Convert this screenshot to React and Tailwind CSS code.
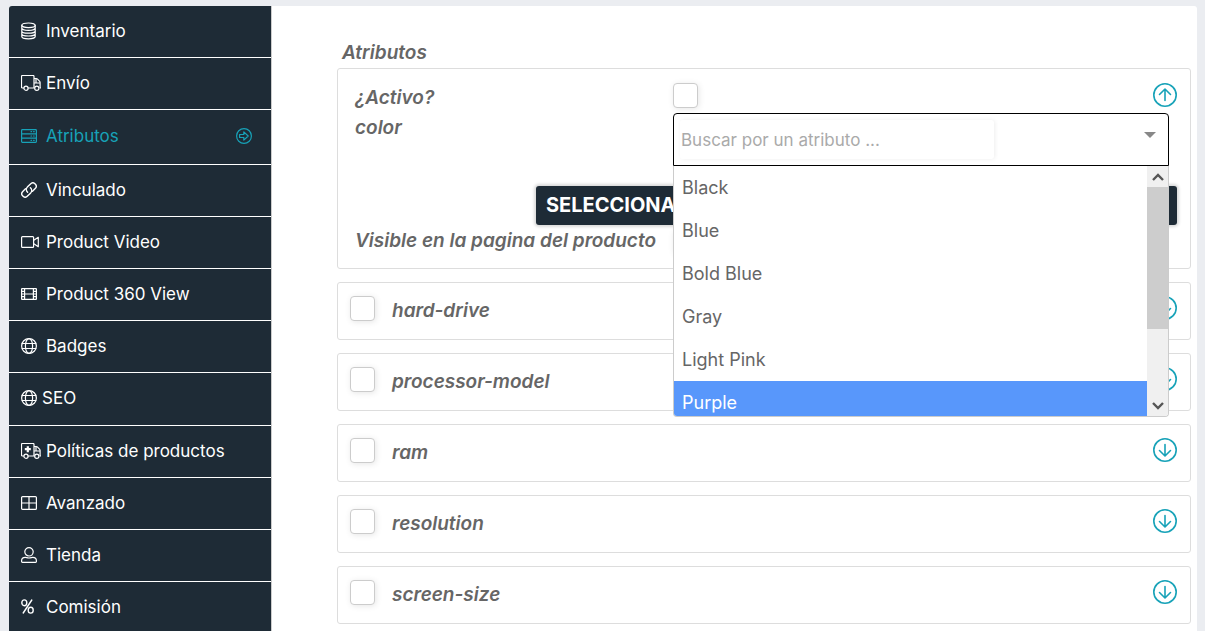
import { useState } from "react";

const strokeProps = {
  fill: "none",
  stroke: "currentColor",
  strokeWidth: 1.2,
  strokeLinecap: "round",
  strokeLinejoin: "round",
  "aria-hidden": true,
};

function DatabaseIcon() {
  return (
    <svg width="16" height="18" viewBox="0 0 16 18" {...strokeProps}>
      <ellipse cx="7.5" cy="3.3" rx="6.7" ry="2.3" />
      <path d="M.8 3.3v11.2c0 1.300 3 2.300 6.700 2.300s6.700-1 6.700-2.300V3.300M.8 6.100c0 1.300 3 2.300 6.700 2.300s6.700-1 6.700-2.300M.8 8.900c0 1.300 3 2.300 6.700 2.300s6.700-1 6.700-2.300M.8 11.700c0 1.300 3 2.300 6.700 2.300s6.700-1 6.700-2.300" />
    </svg>
  );
}

function TruckIcon({ medical = false }) {
  return (
    <svg width="20" height="16" viewBox="0 0 20 16" {...strokeProps}>
      <path d="M2.7 13H1.4a.9.9 0 0 1-.9-.9V1.4c0-.5.4-.9.9-.9h10.700c.5 0 .9.4.9.9V13M7.200 13h6M13 3.500h2.300c.4 0 .7.1 1 .4l2.400 2.500c.3.3.4.6.4 1V13h.4M13 8h6M15 4v4" />
      <circle cx="5" cy="13.200" r="2.100" />
      <circle cx="15.800" cy="13.200" r="2.100" />
      {medical && <path d="M6.800 3.200v6M3.800 6.200h6" strokeWidth="2.200" strokeLinecap="butt" />}
    </svg>
  );
}

function ServerIcon() {
  return (
    <svg width="16" height="14" viewBox="0 0 16 14" {...strokeProps}>
      <rect x=".6" y=".6" width="14.8" height="12.8" rx=".8" />
      <path d="M.6 4.8h14.8M.6 9.2h14.8" />
      <path d="M10 2.7h.6M12.6 2.7h.6M10 7h.6M12.6 7h.6M10 11.3h.6M12.6 11.3h.6" />
    </svg>
  );
}

function LinkIcon() {
  return (
    <svg width="16" height="16" viewBox="0 0 16 16" {...strokeProps} strokeWidth="1.4">
      <path d="M6.600 10.300a3.700 3.700 0 0 1-.3-5.200l3.200-3.200a3.300 3.300 0 0 1 4.700 4.700l-2.700 2.700" />
      <path d="M9.400 5.700a3.700 3.700 0 0 1 .3 5.200l-3.200 3.200a3.300 3.300 0 0 1-4.700-4.700l2.700-2.700" />
    </svg>
  );
}

function VideoIcon() {
  return (
    <svg width="18" height="12" viewBox="0 0 18 12" {...strokeProps}>
      <rect x=".6" y=".6" width="12" height="10.8" rx=".9" />
      <path d="m12.8 4.3 4.5-3v9.4l-4.5-3" />
    </svg>
  );
}

function FilmIcon() {
  return (
    <svg width="16" height="12" viewBox="0 0 16 12" {...strokeProps}>
      <rect x=".6" y=".6" width="14.8" height="10.8" rx=".5" />
      <path d="M3.6.6v10.8M12.4.6v10.8M3.6 6h8.8M.6 3.3h3M.6 6h3M.6 8.7h3M12.4 3.3h3M12.4 6h3M12.4 8.7h3" />
    </svg>
  );
}

function GlobeIcon() {
  return (
    <svg width="16" height="16" viewBox="0 0 16 16" {...strokeProps}>
      <circle cx="8" cy="8" r="7.4" />
      <ellipse cx="8" cy="8" rx="3.6" ry="7.4" />
      <path d="M1.2 5.5h13.6M1.2 10.5h13.6" />
    </svg>
  );
}

function WindowIcon() {
  return (
    <svg width="16" height="14" viewBox="0 0 16 14" {...strokeProps}>
      <rect x=".6" y=".6" width="14.8" height="12.8" rx="1" />
      <path d="M8 .6v12.8M.6 7h14.8" />
    </svg>
  );
}

function UserIcon() {
  return (
    <svg width="16" height="16" viewBox="0 0 16 16" {...strokeProps}>
      <circle cx="8" cy="4.8" r="4.2" />
      <path d="M1.4 15.4a.8.8 0 0 1-.8-.8v-.8c0-2 1.6-3.4 3.6-3.4 1.2 0 2 .6 3.8.6s2.6-.6 3.8-.6c2 0 3.6 1.4 3.6 3.4v.8c0 .5-.3.8-.8.8z" />
    </svg>
  );
}

function PercentIcon() {
  return (
    <svg width="13" height="15" viewBox="0 0 13 15" {...strokeProps} strokeWidth="1.4">
      <ellipse cx="3.3" cy="3.8" rx="2.5" ry="2.9" />
      <ellipse cx="9.7" cy="11.2" rx="2.5" ry="2.9" />
      <path d="M10.8 1 2.2 14" />
    </svg>
  );
}

function ActiveArrowIcon() {
  return (
    <svg width="16" height="16" viewBox="0 0 16 16" {...strokeProps}>
      <circle cx="8" cy="8" r="7.4" />
      <path d="M3.6 6.5h4.2V3.9L12.2 8l-4.4 4.1V9.5H3.6z" />
    </svg>
  );
}

function ToggleIcon({ up = false }) {
  return (
    <svg width="24" height="24" viewBox="0 0 24 24" {...strokeProps} strokeWidth="1.6">
      <circle cx="12" cy="12" r="11.2" />
      {up ? <path d="M12 17.5V6.500M6.500 11.500 12 6l5.500 5.500" /> : <path d="M12 6.500v11M6.500 12.500 12 18l5.500-5.500" />}
    </svg>
  );
}

const menu = [
  { label: "Inventario", icon: <DatabaseIcon /> },
  { label: "Envío", icon: <TruckIcon /> },
  { label: "Atributos", icon: <ServerIcon />, active: true },
  { label: "Vinculado", icon: <LinkIcon /> },
  { label: "Product Video", icon: <VideoIcon /> },
  { label: "Product 360 View", icon: <FilmIcon /> },
  { label: "Badges", icon: <GlobeIcon /> },
  { label: "SEO", icon: <GlobeIcon />, compact: true },
  { label: "Políticas de productos", icon: <TruckIcon medical /> },
  { label: "Avanzado", icon: <WindowIcon /> },
  { label: "Tienda", icon: <UserIcon /> },
  { label: "Comisión", icon: <PercentIcon /> },
];

const attributes = ["hard-drive", "processor-model", "ram", "resolution", "screen-size"];
const colors = ["Black", "Blue", "Bold Blue", "Gray", "Light Pink", "Purple"];

function rowHeight(item) {
  if (item.active) return "min-h-[55px] text-[#17a2b8]";
  return item.compact ? "min-h-[53px]" : "min-h-13";
}

function Sidebar() {
  return (
    <nav className="w-[262px] shrink-0 overflow-hidden rounded-tl-[3px] bg-[#1e2b36] text-[17px] leading-6 text-white">
      {menu.map((item) => (
        <a key={item.label} href="#" className={"flex items-center border-b border-white px-3 pb-0.5 " + rowHeight(item)}>
          <span className={"mr-[5px] flex shrink-0 " + (item.compact ? "w-4" : "w-5")}>{item.icon}</span>
          <span>{item.label}</span>
          {item.active && (
            <span className="mr-[7px] ml-auto">
              <ActiveArrowIcon />
            </span>
          )}
        </a>
      ))}
    </nav>
  );
}

function Checkbox({ id }) {
  return (
    <input
      id={id}
      type="checkbox"
      className="size-[25px] shrink-0 appearance-none rounded-[4px] border border-[#ccc] bg-white shadow-[1px_1px_6px_rgba(0,0,0,0.1)] checked:bg-[#17a2b8]"
    />
  );
}

function ColorSelect() {
  const [selected, setSelected] = useState("Purple");
  return (
    <div className="absolute inset-x-0 top-0 z-10">
      <div className="flex items-start rounded-t-[4px] border border-black bg-white p-[6px]">
        <input
          id="color"
          type="text"
          placeholder="Buscar por un atributo ..."
          className="h-[39px] w-[314px] rounded-[3px] pl-px shadow-[1px_0px_4px_rgba(0,0,0,0.07)] outline-none placeholder:text-[#aaa]"
        />
        <svg width="12" height="6" viewBox="0 0 12 6" className="mt-3 mr-1.5 ml-auto" aria-hidden="true">
          <path d="M0 0h12L6 6z" fill="#888" />
        </svg>
      </div>
      <div className="flex h-[251px] overflow-hidden rounded-b-[4px] border border-t-0 border-[#ccc] bg-white">
        <ul role="listbox" aria-label="color" className="flex-1 overflow-hidden text-lg">
          {colors.map((color) => (
            <li
              key={color}
              role="option"
              aria-selected={color === selected}
              onClick={() => setSelected(color)}
              className={
                "flex h-[43px] items-center px-2 " + (color === selected ? "bg-[#5897fb] text-white" : "text-[#666]")
              }
            >
              {color}
            </li>
          ))}
        </ul>
        <div className="flex w-[21px] flex-col bg-[#f0f0f0] text-[#555]" aria-hidden="true">
          <div className="flex h-[21px] items-center justify-center">
            <svg width="12" height="8" viewBox="0 0 12 8" fill="none" stroke="currentColor" strokeWidth="2.4">
              <path d="m1 7 5-5 5 5" />
            </svg>
          </div>
          <div className="h-[142px] bg-[#cdcdcd]" />
          <div className="mt-auto flex h-[21px] items-center justify-center">
            <svg width="12" height="8" viewBox="0 0 12 8" fill="none" stroke="currentColor" strokeWidth="2.4">
              <path d="m1 1 5 5 5-5" />
            </svg>
          </div>
        </div>
      </div>
    </div>
  );
}

export default function App() {
  return (
    <div className="flex min-h-screen bg-[#ebedf1] pt-1.5 pr-2 pl-[9px] font-['Inter',sans-serif]">
      <Sidebar />
      <main className="min-w-0 flex-1 rounded-tr-[3px] border-l border-[#ccc] bg-white pt-[34px] pr-1.5 pl-[65px] text-[#666]">
        <h2 className="mb-[3px] pl-[5px] text-[19px] leading-[25px] font-semibold italic">Atributos</h2>

        <div className="flex flex-col gap-[13px] text-[19px] leading-6 font-semibold italic">
          <section className="rounded-[3px] border border-[#ddd] pt-3.5 pr-[13px] pb-3.5 pl-[17px]">
            <div className="flex items-start">
              <label htmlFor="active" className="w-[318px] pt-[3px]">
                ¿Activo?
              </label>
              <Checkbox id="active" />
              <button type="button" aria-label="Contraer color" className="ml-auto text-[#17a2b8]">
                <ToggleIcon up />
              </button>
            </div>
            <div className="mt-[3px] flex h-[73px] items-start">
              <label htmlFor="color" className="w-[318px] pt-[3px]">
                color
              </label>
              <div className="relative mr-2 flex-1 text-[17px] font-normal not-italic">
                <ColorSelect />
              </div>
            </div>
            <button
              type="button"
              className="ml-[181px] block w-[641px] max-w-full rounded-[3px] bg-[#1e2b36] px-2.5 text-left text-xl leading-[39px] font-bold text-white not-italic shadow-[0_0_3px_2px_rgba(0,0,0,0.15)]"
            >
              SELECCIONAR
            </button>
            <div className="mt-1 flex items-start">
              <label htmlFor="visible" className="w-[318px]">
                Visible en la pagina del producto
              </label>
              <Checkbox id="visible" />
            </div>
          </section>

          {attributes.map((name) => (
            <section key={name} className="flex min-h-[58px] items-start rounded-[3px] border border-[#ddd] px-[13px] pt-[13px]">
              <div className="-ml-px flex items-start">
                <Checkbox id={name} />
                <label htmlFor={name} className="ml-[17px] pt-[3px]">
                  {name}
                </label>
              </div>
              <button type="button" aria-label={"Expandir " + name} className="ml-auto text-[#17a2b8]">
                <ToggleIcon />
              </button>
            </section>
          ))}
        </div>
      </main>
    </div>
  );
}
